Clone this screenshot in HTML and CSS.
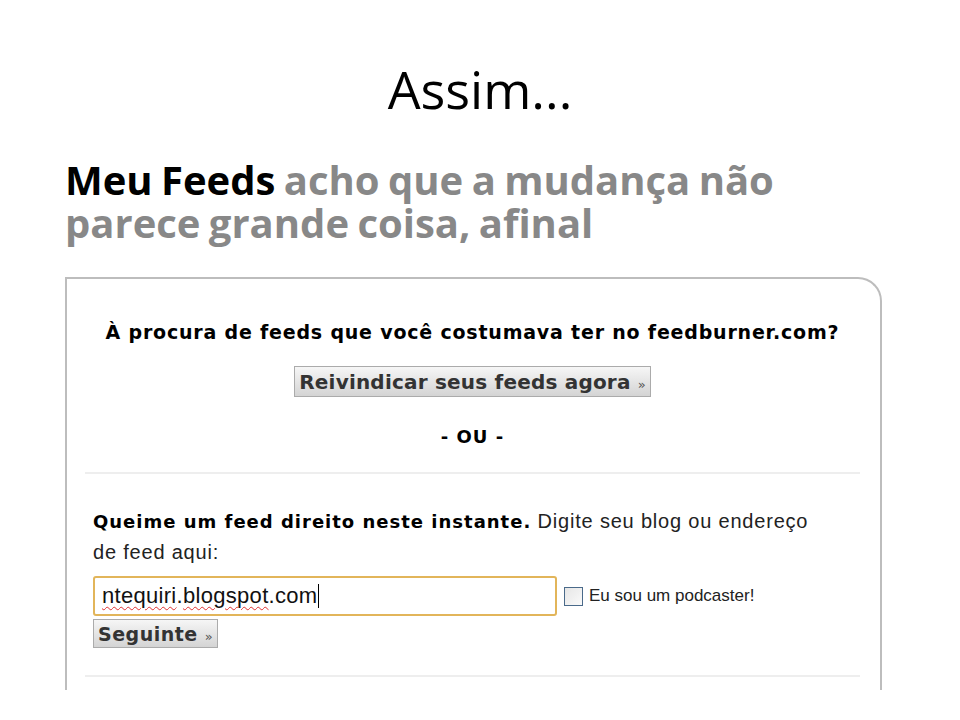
FILE: index.html
```html
<!DOCTYPE html>
<html lang="pt">
<head>
    <meta charset="UTF-8">
    <meta name="viewport" content="width=device-width, initial-scale=1.0">
    <title>Assim...</title>
    <link rel="stylesheet" href="styles.css">
</head>
<body>
    <div class="slide">
        <h1 class="slide-title">Assim...</h1>

        <div class="shot">
            <h2 class="feeds-title"><span class="dark">Meu Feeds</span> <span class="rest">acho que a mudança não parece grande coisa, afinal</span></h2>

            <div class="panel">
                <div class="claim">
                    <p class="claim-question">À procura de feeds que você costumava ter no feedburner.com?</p>
                    <button class="btn btn-big">Reivindicar seus feeds agora <span class="arrows">»</span></button>
                    <p class="or">- OU -</p>
                </div>

                <div class="burn">
                    <p class="burn-text"><strong>Queime um feed direito neste instante.</strong> <span>Digite seu blog ou endereço de feed aqui:</span></p>
                    <div class="burn-row">
                        <div class="url-field"><span class="typo">ntequiri</span>.<span class="typo">blogspot</span>.com<span class="caret"></span></div>
                        <label class="podcast"><span class="check"></span>Eu sou um podcaster!</label>
                    </div>
                    <button class="btn btn-small">Seguinte <span class="arrows">»</span></button>
                </div>
            </div>
        </div>
    </div>
</body>
</html>
```

FILE: styles.css
```css
body {
    margin: 0;
    background: #fff;
    font-family: "Liberation Sans", Arial, sans-serif;
    color: #000;
}
.slide {
    width: 960px;
    height: 720px;
    overflow: hidden;
}
.slide-title {
    margin: 0;
    padding-top: 63px;
    font-family: "Open Sans", sans-serif;
    font-weight: 400;
    font-size: 52px;
    line-height: 52px;
    text-align: center;
}
.shot {
    margin: 43px 0 0 65px;
    width: 817px;
}
.feeds-title {
    margin: 0;
    font-family: "Open Sans", sans-serif;
    font-weight: 700;
    font-size: 40px;
    line-height: 43px;
    word-spacing: -2px;
    color: #888;
}
.feeds-title .dark {
    color: #000;
}
.panel {
    margin-top: 33px;
    height: 411px;
    border: 2px solid #bdbdbd;
    border-bottom: 0;
    border-top-right-radius: 24px;
    padding: 0 20px 0 18px;
    overflow: hidden;
}
.claim {
    text-align: center;
    padding: 42px 0 25px;
    border-bottom: 2px solid #eee;
}
.claim-question {
    margin: 0 0 23px;
    font-family: "DejaVu Sans", sans-serif;
    font-weight: 700;
    font-size: 19px;
    line-height: 22px;
    letter-spacing: 0.8px;
}
.btn {
    display: block;
    font-family: "DejaVu Sans", sans-serif;
    font-weight: 700;
    color: #333;
    background: linear-gradient(#f6f6f6, #d4d4d4);
    border: 1px solid #ababab;
    border-radius: 0;
    padding: 0 4px;
}
.btn-big {
    margin: 0 auto;
    height: 31px;
    font-size: 20px;
    letter-spacing: 0.2px;
}
.btn-small {
    margin-top: 3px;
    height: 29px;
    font-size: 19px;
    letter-spacing: 0.5px;
}
.arrows {
    font-weight: 400;
    font-size: 13px;
    letter-spacing: 0;
    color: #555;
}
.or {
    margin: 30px 0 0;
    font-family: "DejaVu Sans", sans-serif;
    font-weight: 700;
    font-size: 18px;
    line-height: 20px;
    letter-spacing: 1px;
}
.burn {
    padding: 32px 40px 27px 8px;
    border-bottom: 2px solid #eee;
}
.burn-text {
    margin: 0 0 9px;
    font-size: 20px;
    line-height: 30px;
    letter-spacing: 0.8px;
    color: #222;
}
.burn-text strong {
    font-family: "DejaVu Sans", sans-serif;
    font-size: 18px;
    letter-spacing: 1px;
    color: #000;
}
.burn-row {
    display: flex;
    align-items: center;
    gap: 7px;
}
.url-field {
    box-sizing: border-box;
    flex: none;
    width: 464px;
    height: 40px;
    border: 2px solid #e2b55a;
    border-radius: 3px;
    padding: 0 7px;
    display: flex;
    align-items: center;
    font-size: 22px;
    letter-spacing: 0.3px;
    color: #111;
}
.typo {
    text-decoration: underline wavy #e03030;
    text-decoration-thickness: 1px;
    text-underline-offset: 3px;
}
.caret {
    display: inline-block;
    width: 1px;
    height: 24px;
    background: #000;
    margin-left: 1px;
}
.podcast {
    display: flex;
    align-items: center;
    gap: 6px;
    font-size: 17px;
    white-space: nowrap;
    color: #222;
}
.check {
    width: 17px;
    height: 17px;
    border: 1px solid #4a6a8a;
    background: linear-gradient(135deg, #e6e6e6, #fafafa);
}
```
